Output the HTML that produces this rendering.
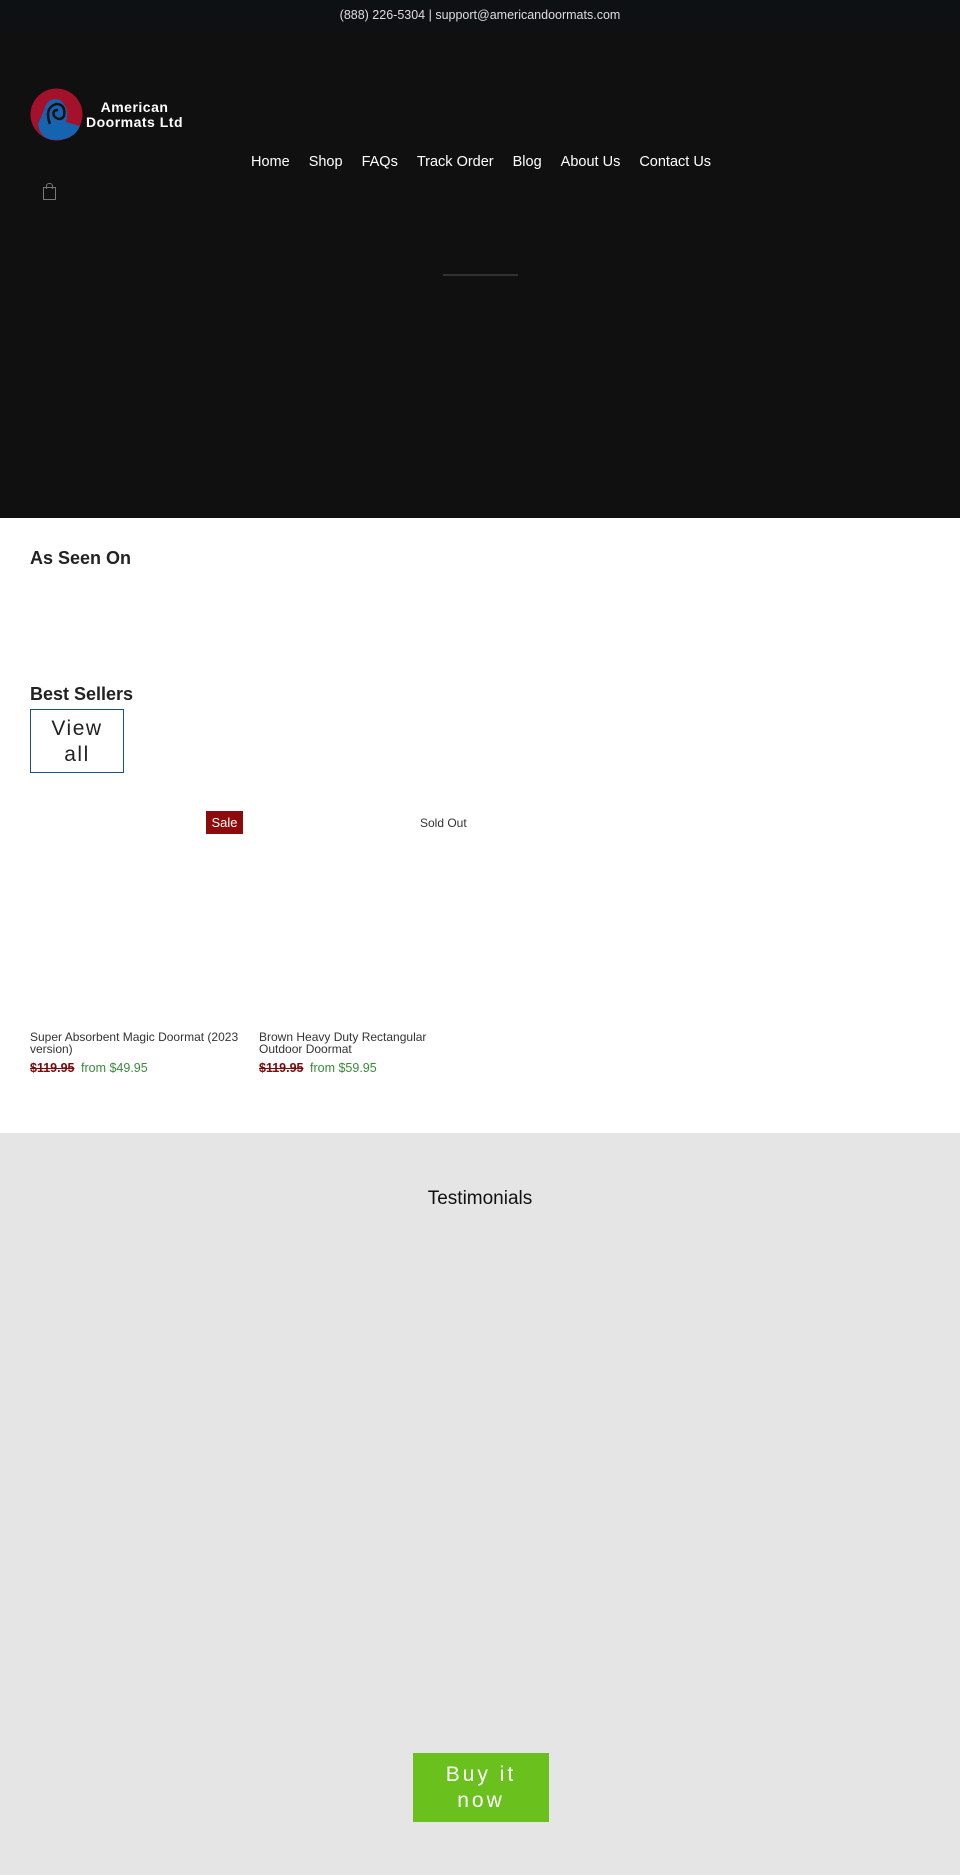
<!DOCTYPE html>
<html><head><style>
*{margin:0;padding:0;box-sizing:border-box}
body{width:960px;height:1875px;font-family:"Liberation Sans",sans-serif;background:#fff;position:relative;overflow:hidden}
.a{position:absolute}
</style></head><body>
<div class="a" style="left:0;top:0;width:960px;height:518px;background:#101010"></div>
<div class="a" style="left:0;top:0;width:960px;height:30px;background:#0e1113"></div>
<div class="a" style="left:0;top:8px;width:960px;text-align:center;color:#ddd;font-size:12.5px">(888) 226-5304 | support@americandoormats.com</div>
<svg class="a" style="left:30px;top:88px" width="53" height="53" viewBox="0 0 53 53">
<circle cx="26.5" cy="26.5" r="26" fill="#a3122a"/>
<path d="M8 36 Q10 52 26 52 Q44 52 50 38 L36 34 Q40 20 30 12 Q18 8 14 22 Z" fill="#1663b0"/>
<path d="M20 36 Q14 20 26 16 Q36 16 34 28 Q30 34 24 28 Q22 22 28 22" fill="none" stroke="#111" stroke-width="2.5"/>
</svg>
<div class="a" style="left:86px;top:100px;color:#fff;font-weight:bold;font-size:14px;line-height:15px;text-align:center;letter-spacing:.5px">American<br>Doormats Ltd</div>
<div class="a" style="left:251px;top:154px;color:#fff;font-size:14.5px">
<span style="margin-right:19px">Home</span><span style="margin-right:19px">Shop</span><span style="margin-right:19px">FAQs</span><span style="margin-right:19px">Track Order</span><span style="margin-right:19px">Blog</span><span style="margin-right:19px">About Us</span><span>Contact Us</span></div>
<div class="a" style="left:43px;top:187px;width:13px;height:13px;border:1.5px solid #777"></div>
<div class="a" style="left:46px;top:183px;width:7px;height:6px;border:1.5px solid #777;border-bottom:none;border-radius:3px 3px 0 0"></div>
<div class="a" style="left:443px;top:274px;width:75px;height:2px;background:#333"></div>
<div class="a" style="left:30px;top:548px;font-size:18px;font-weight:bold;color:#222">As Seen On</div>
<div class="a" style="left:30px;top:684px;font-size:18px;font-weight:bold;color:#222">Best Sellers</div>
<div class="a" style="left:30px;top:709px;width:94px;height:64px;border:1px solid #1a4e8a;text-align:center;font-size:21px;line-height:26px;padding-top:6px;letter-spacing:1.5px;color:#222">View<br>all</div>
<div class="a" style="left:206px;top:811px;width:37px;height:23px;background:#8f0a0a;color:#fff;font-size:13px;text-align:center;line-height:23px">Sale</div>
<div class="a" style="left:420px;top:816px;font-size:12px;color:#333">Sold Out</div>
<div class="a" style="left:30px;top:1031px;width:232px;font-size:12px;line-height:12px;color:#333">Super Absorbent Magic Doormat (2023 version)</div>
<div class="a" style="left:259px;top:1031px;width:200px;font-size:12px;line-height:12px;color:#333">Brown Heavy Duty Rectangular Outdoor Doormat</div>
<div class="a" style="left:30px;top:1061px;font-size:12.5px"><s style="color:#7a0b0b;font-weight:bold">$119.95</s> <span style="color:#3a8a3a;margin-left:3px">from $49.95</span></div>
<div class="a" style="left:259px;top:1061px;font-size:12.5px"><s style="color:#7a0b0b;font-weight:bold">$119.95</s> <span style="color:#3a8a3a;margin-left:3px">from $59.95</span></div>
<div class="a" style="left:0;top:1133px;width:960px;height:742px;background:#e5e5e5"></div>
<div class="a" style="left:0;top:1188px;width:960px;text-align:center;font-size:19px;color:#111">Testimonials</div>
<div class="a" style="left:413px;top:1753px;width:136px;height:69px;background:#6ac11e;color:#fff;text-align:center;font-size:21px;line-height:26px;padding-top:9px;letter-spacing:3px">Buy it<br>now</div>
</body></html>
